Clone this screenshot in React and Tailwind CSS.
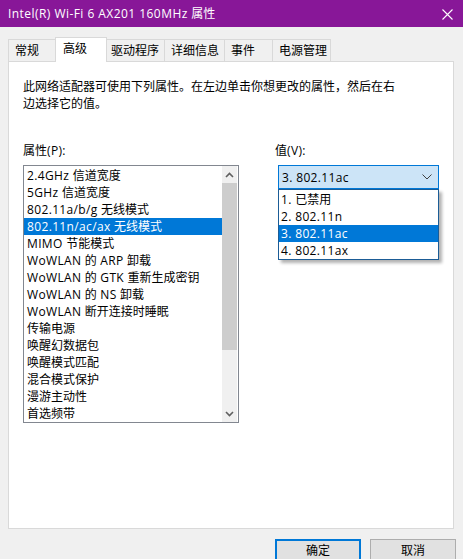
import React from "react";

const props = [
  "2.4GHz 信道宽度",
  "5GHz 信道宽度",
  "802.11a/b/g 无线模式",
  "802.11n/ac/ax 无线模式",
  "MIMO 节能模式",
  "WoWLAN 的 ARP 卸载",
  "WoWLAN 的 GTK 重新生成密钥",
  "WoWLAN 的 NS 卸载",
  "WoWLAN 断开连接时睡眠",
  "传输电源",
  "唤醒幻数据包",
  "唤醒模式匹配",
  "混合模式保护",
  "漫游主动性",
  "首选频带",
];

const values = ["1. 已禁用", "2. 802.11n", "3. 802.11ac", "4. 802.11ax"];

function T({ text, wide }) {
  const parts = text.split(/([\u3000-\u303f\u4e00-\u9fff\uff00-\uffef]+)/);
  return (
    <>
      {parts.map((p, i) =>
        p === "" ? null : /[\u3000-\u303f\u4e00-\u9fff\uff00-\uffef]/.test(p) ? (
          <span key={i}>{p}</span>
        ) : (
          <span key={i} className={wide ? "tracking-[0.45px]" : "tracking-[0.35px]"}>
            {p}
          </span>
        )
      )}
    </>
  );
}

function Tab({ label, w, pl, selected, first }) {
  if (selected) {
    return (
      <div
        className={`relative z-10 -ml-px h-[25px] bg-white border border-b-0 border-[#d9d9d9] pt-[2px] leading-[17px]`}
        style={{ width: w, paddingLeft: pl }}
      >
        {label}
      </div>
    );
  }
  return (
    <div
      className={`${first ? "" : "-ml-px"} mb-px h-[22px] bg-[#f0f0f0] border border-b-0 border-[#d9d9d9] flex items-center leading-[17px]`}
      style={{ width: w, paddingLeft: pl }}
    >
      {label}
    </div>
  );
}

export default function App() {
  return (
    <div className="w-[463px] h-[559px] bg-[#f0f0f0] overflow-hidden flex flex-col text-[12px] text-black font-['Open_Sans','Noto_Sans_CJK_SC',sans-serif]">
      {/* Title bar */}
      <div className="h-[27px] shrink-0 bg-[#881798] text-white flex items-center justify-between pl-[8px] pr-[10px]">
        <span className="leading-[17px]">
          <T text="Intel(R) Wi-Fi 6 AX201 160MHz 属性" wide />
        </span>
        <svg width="11" height="11" viewBox="0 0 11 11" className="mt-[1px]">
          <path d="M0.5 0.5 L10.5 10.5 M10.5 0.5 L0.5 10.5" stroke="white" strokeWidth="1.1" />
        </svg>
      </div>

      {/* Tabs */}
      <div className="mt-[10px] ml-[8px] flex items-end h-[25px] -mb-px relative z-10">
        <Tab label="常规" w={48} pl={6} first />
        <Tab label="高级" w={52} pl={7} selected />
        <Tab label="驱动程序" w={59} pl={4} />
        <Tab label="详细信息" w={61} pl={6} />
        <Tab label="事件" w={49} pl={6} />
        <Tab label="电源管理" w={59} pl={6} />
      </div>

      {/* Panel */}
      <div className="ml-[8px] w-[446px] h-[468px] shrink-0 bg-white border border-[#d9d9d9] px-[14px] pt-[16px]">
        <div className="leading-[17px]">
          此网络适配器可使用下列属性。在左边单击你想更改的属性，然后在右
          <br />
          边选择它的值。
        </div>

        <div className="mt-[30px] flex">
          {/* Left column */}
          <div className="w-[217px] flex flex-col">
            <div className="leading-[17px] h-[17px]">
              <T text="属性(P):" />
            </div>
            <div className="mt-[6px] h-[258px] border border-[#828790] bg-white flex">
              <div className="w-[198px] pt-[1px] flex flex-col">
                {props.map((p, i) => (
                  <div
                    key={p}
                    className={`h-[17px] leading-[17px] pl-[3px] whitespace-nowrap ${
                      i === 3 ? "bg-[#0078d7] text-white" : ""
                    }`}
                  >
                    <T text={p} />
                  </div>
                ))}
              </div>
              <div className="w-[15px] bg-[#f0f0f0] flex flex-col">
                <div className="h-[17px] flex items-center justify-center">
                  <svg width="9" height="6" viewBox="0 0 9 6">
                    <path d="M1 5 L4.5 1.5 L8 5" stroke="#606060" strokeWidth="1.6" fill="none" />
                  </svg>
                </div>
                <div className="h-[167px] bg-[#cdcdcd]" />
                <div className="flex-1" />
                <div className="h-[17px] flex items-center justify-center">
                  <svg width="9" height="6" viewBox="0 0 9 6">
                    <path d="M1 1 L4.5 4.5 L8 1" stroke="#606060" strokeWidth="1.6" fill="none" />
                  </svg>
                </div>
              </div>
            </div>
          </div>

          {/* Right column */}
          <div className="ml-[36px] flex flex-col relative">
            <div className="leading-[17px] h-[17px]">
              <T text="值(V):" />
            </div>
            <div className="mt-[6px] ml-[3px] w-[161px] h-[24px] bg-[#cce4f7] border border-[#0078d7] flex items-center justify-between pl-[3px] pr-[6px]">
              <span className="leading-[17px]">
                <T text="3. 802.11ac" />
              </span>
              <svg width="10" height="6" viewBox="0 0 10 6">
                <path d="M0.5 0.5 L5 5 L9.5 0.5" stroke="#404040" strokeWidth="1" fill="none" />
              </svg>
            </div>
            <div className="absolute left-[3px] top-[47px] w-[161px] h-[71px] bg-white border border-[#1b5c96] pt-[1px] shadow-[3px_3px_3px_rgba(0,0,0,0.3)]">
              {values.map((v, i) => (
                <div
                  key={v}
                  className={`h-[17px] leading-[17px] pl-[2px] ${
                    i === 2 ? "bg-[#0078d7] text-white" : ""
                  }`}
                >
                  <T text={v} />
                </div>
              ))}
            </div>
          </div>
        </div>
      </div>

      {/* Buttons */}
      <div className="mt-[10px] flex justify-end gap-[9px] pr-[7px]">
        <div className="w-[86px] h-[23px] bg-[#e1e1e1] border-2 border-[#0078d7] flex items-center justify-center leading-[17px]">
          确定
        </div>
        <div className="w-[86px] h-[23px] bg-[#e1e1e1] border border-[#adadad] flex items-center justify-center leading-[17px]">
          取消
        </div>
      </div>
    </div>
  );
}
